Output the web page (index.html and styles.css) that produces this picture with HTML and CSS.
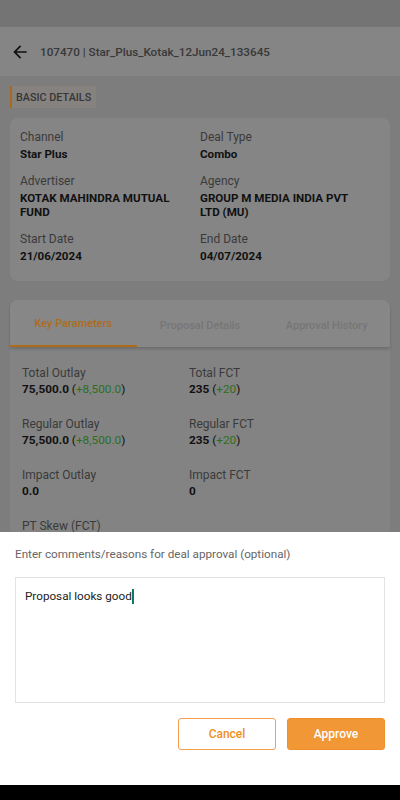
FILE: index.html
```html
<!DOCTYPE html>
<html>
<head>
<meta charset="utf-8">
<link rel="stylesheet" href="styles.css">
</head>
<body>
<div class="statusbar"></div>
<header class="appbar">
  <svg class="back" viewBox="0 0 24 24" width="20" height="20"><path d="M20 11H7.83l5.59-5.59L12 4l-8 8 8 8 1.41-1.41L7.83 13H20v-2z" fill="#111"/></svg>
  <span class="title">107470 | Star_Plus_Kotak_12Jun24_133645</span>
</header>
<main class="content">
  <div class="section-head">BASIC DETAILS</div>
  <section class="card details">
    <div class="field"><div class="label">Channel</div><div class="value">Star Plus</div></div>
    <div class="field"><div class="label">Deal Type</div><div class="value">Combo</div></div>
    <div class="field"><div class="label">Advertiser</div><div class="value">KOTAK MAHINDRA MUTUAL FUND</div></div>
    <div class="field"><div class="label">Agency</div><div class="value">GROUP M MEDIA INDIA PVT LTD (MU)</div></div>
    <div class="field"><div class="label">Start Date</div><div class="value">21/06/2024</div></div>
    <div class="field"><div class="label">End Date</div><div class="value">04/07/2024</div></div>
  </section>
  <section class="card tabs-card">
    <nav class="tabs">
      <div class="tab active">Key Parameters</div>
      <div class="tab">Proposal Details</div>
      <div class="tab">Approval History</div>
    </nav>
    <div class="params">
      <div class="param"><div class="plabel">Total Outlay</div><div class="pvalue"><b>75,500.0</b> (<span class="up">+8,500.0</span>)</div></div>
      <div class="param"><div class="plabel">Total FCT</div><div class="pvalue"><b>235</b> (<span class="up">+20</span>)</div></div>
      <div class="param"><div class="plabel">Regular Outlay</div><div class="pvalue"><b>75,500.0</b> (<span class="up">+8,500.0</span>)</div></div>
      <div class="param"><div class="plabel">Regular FCT</div><div class="pvalue"><b>235</b> (<span class="up">+20</span>)</div></div>
      <div class="param"><div class="plabel">Impact Outlay</div><div class="pvalue"><b>0.0</b></div></div>
      <div class="param"><div class="plabel">Impact FCT</div><div class="pvalue"><b>0</b></div></div>
      <div class="param"><div class="plabel">PT Skew (FCT)</div></div>
    </div>
  </section>
</main>
<div class="sheet">
  <div class="prompt">Enter comments/reasons for deal approval (optional)</div>
  <div class="textbox"><span>Proposal looks good</span><span class="caret"></span></div>
  <div class="actions">
    <button class="btn cancel">Cancel</button>
    <button class="btn approve">Approve</button>
  </div>
</div>
<div class="navbar"></div>
</body>
</html>
```
FILE: styles.css
```css
* { box-sizing: border-box; }
html, body { margin: 0; padding: 0; }
body {
  width: 400px;
  height: 800px;
  overflow: hidden;
  background: #7d7d7d;
  font-family: Roboto, "Noto Sans", sans-serif;
  color: #111;
}
.statusbar { height: 27px; background: #747474; }
.appbar {
  height: 49px;
  background: #858585;
  display: flex;
  align-items: center;
  padding-left: 10px;
  gap: 10px;
}
.back { display: block; margin-top: 1px; }
.title { font-size: 11.7px; font-weight: 500; color: #383838; margin-top: 1px; }
.content { padding: 10px 10px 0; }
.section-head {
  width: 86px;
  height: 22px;
  border-left: 2px solid #a8691c;
  background: #868280;
  font-size: 10.8px;
  font-weight: 500;
  color: #363636;
  display: flex;
  align-items: center;
  padding-left: 4px;
}
.card { background: #858585; border-radius: 8px; }
.details {
  margin-top: 10px;
  padding: 11px 10px 18px;
  display: grid;
  grid-template-columns: 1fr 1fr;
  row-gap: 12px;
}
.label { font-size: 12px; line-height: 16px; color: #3a3a3a; margin-bottom: 2px; }
.value { font-size: 11.6px; line-height: 14px; font-weight: 700; color: #111; padding-right: 10px; }
.tabs-card { margin-top: 19px; border-radius: 8px 8px 0 0; }
.tabs {
  display: flex;
  height: 47px;
  border-radius: 8px 8px 0 0;
  background: #878787;
  box-shadow: 0 2px 3px rgba(0,0,0,0.18);
  position: relative;
}
.tab {
  flex: 1;
  display: flex;
  align-items: center;
  justify-content: center;
  font-size: 11px;
  font-weight: 500;
  color: #767676;
  padding-top: 3px;
}
.tab.active { color: #ad6c1c; border-bottom: 2px solid #ad6c1c; padding-top: 1px; }
.params {
  padding: 18px 12px 0;
  display: grid;
  grid-template-columns: 167px 1fr;
  row-gap: 19px;
  background: #838383;
}
.plabel { font-size: 12px; line-height: 16px; color: #3a3a3a; }
.pvalue { font-size: 11.8px; line-height: 16px; color: #111; }
.pvalue b { font-weight: 700; }
.up { color: #2d6f1e; }
.sheet {
  position: fixed;
  left: 0;
  right: 0;
  bottom: 15px;
  height: 253px;
  background: #fff;
  padding: 14px 15px 0;
}
.prompt { font-size: 11.7px; line-height: 16px; color: #666; }
.textbox {
  margin-top: 15px;
  height: 126px;
  border: 1px solid #e3e3e3;
  padding: 9px 9px;
  font-size: 11.7px;
  line-height: 18px;
  color: #222;
  display: flex;
  align-items: flex-start;
}
.caret { display: inline-block; width: 2px; height: 15px; background: #0d7a68; margin-top: 2px; }
.actions { margin-top: 15px; display: flex; justify-content: flex-end; gap: 11px; }
.btn {
  width: 98px;
  height: 32px;
  border-radius: 3px;
  font-family: Roboto, "Noto Sans", sans-serif;
  font-size: 12px;
  font-weight: 500;
  cursor: pointer;
}
.cancel { background: #fff; border: 1px solid #f2a050; color: #f0901f; }
.approve { background: #f19736; border: 1px solid #ee8f2a; color: #fff; }
.navbar { position: fixed; left: 0; right: 0; bottom: 0; height: 15px; background: #000; }
```
